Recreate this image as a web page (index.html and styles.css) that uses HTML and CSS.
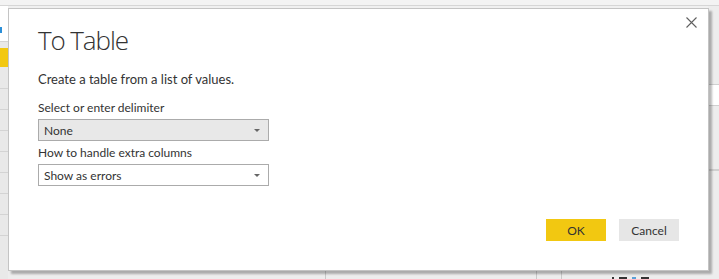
FILE: index.html
```html
<!DOCTYPE html>
<html lang="en">
<head>
  <meta charset="UTF-8">
  <meta name="viewport" content="width=device-width, initial-scale=1.0">
  <title>To Table</title>
  <link rel="stylesheet" href="styles.css">
</head>
<body>
  <div class="workspace">
    <div class="top-strip"></div>
    <div class="workspace-body">
      <div class="row-col left-col">
        <div class="cell cell-white"><span class="cursor-mark"></span></div>
        <div class="cell cell-yellow"></div>
        <div class="cell"></div>
        <div class="cell"></div>
        <div class="cell"></div>
        <div class="cell"></div>
        <div class="cell"></div>
        <div class="cell"></div>
        <div class="cell"></div>
        <div class="cell"></div>
      </div>
      <div class="main-area">
        <div class="bottom-cols">
          <div class="bcol bcol-a"></div>
          <div class="bcol bcol-b"></div>
          <div class="bcol bcol-c"></div>
          <div class="bcol bcol-d">
            <span class="glyph-bit"></span>
            <span class="glyph-bit bit-wide"></span>
            <span class="glyph-bit bit-blue"></span>
            <span class="glyph-bit bit-wide"></span>
          </div>
        </div>
      </div>
      <div class="row-col right-col">
        <div class="rcell rcell-top"></div>
        <div class="rcell rcell-white"></div>
        <div class="rcell rcell-mid"></div>
        <div class="rcell"></div>
      </div>
    </div>
  </div>

  <div class="dialog" role="dialog" aria-labelledby="dialog-title">
    <button class="close-btn" aria-label="Close">
      <svg width="11" height="11" viewBox="0 0 11 11">
        <path d="M0.5 0.5 L10.5 10.5 M10.5 0.5 L0.5 10.5" stroke="#5f5f5f" stroke-width="1.1" fill="none"/>
      </svg>
    </button>
    <h2 class="dialog-title" id="dialog-title">To Table</h2>
    <p class="dialog-desc">Create a table from a list of values.</p>
    <div class="field">
      <label for="delimiter">Select or enter delimiter</label>
      <div class="select select-disabled" id="delimiter">
        <span>None</span>
        <span class="caret"></span>
      </div>
    </div>
    <div class="field">
      <label for="extra-columns">How to handle extra columns</label>
      <div class="select" id="extra-columns">
        <span>Show as errors</span>
        <span class="caret"></span>
      </div>
    </div>
    <div class="dialog-actions">
      <button class="btn btn-primary">OK</button>
      <button class="btn">Cancel</button>
    </div>
  </div>
</body>
</html>
```

FILE: styles.css
```css
* {
  box-sizing: border-box;
}
html, body {
  margin: 0;
  width: 719px;
  height: 279px;
  overflow: hidden;
  background: #f0f0f0;
  font-family: "Segoe UI", Lato, "Open Sans", sans-serif;
  color: #333;
}
.workspace {
  display: flex;
  flex-direction: column;
  height: 279px;
}
.top-strip {
  height: 6px;
  background: #f3f3f3;
  border-bottom: 1px solid #d6d6d6;
}
.workspace-body {
  flex: 1;
  display: flex;
}
.left-col {
  width: 8px;
  display: flex;
  flex-direction: column;
  background: #e9e9e9;
}
.cell {
  height: 21px;
  border-bottom: 1px solid #d4d4d4;
}
.cell-white {
  height: 36px;
  background: #fff;
  position: relative;
}
.cursor-mark {
  position: absolute;
  left: 0;
  top: 21px;
  width: 2px;
  height: 6px;
  background: #2b8fd8;
}
.cell-yellow {
  height: 26px;
  border-top: 6px solid #e9e9e9;
  background: #f2c811;
  border-bottom: 1px solid #e9e9e9;
}
.main-area {
  flex: 1;
  display: flex;
  flex-direction: column;
  justify-content: flex-end;
  background: #f0f0f0;
}
.bottom-cols {
  height: 12px;
  display: flex;
  background: #ededed;
}
.bcol {
  border-right: 1px solid #c9c9c9;
}
.bcol-a { width: 318px; }
.bcol-b { width: 211px; }
.bcol-c { width: 25px; }
.bcol-d {
  flex: 1;
  border-right: 0;
  display: flex;
  align-items: flex-end;
  gap: 5px;
  padding-left: 50px;
}
.glyph-bit {
  width: 2px;
  height: 2px;
  background: #333;
}
.glyph-bit.bit-wide { width: 8px; }
.glyph-bit.bit-blue { background: #5aa0d8; width: 4px; }
.right-col {
  width: 11px;
  display: flex;
  flex-direction: column;
  background: #ededed;
}
.rcell {
  border-bottom: 1px solid #d0d0d0;
}
.rcell-top { height: 79px; }
.rcell-white { height: 21px; background: #fff; }
.rcell-mid { height: 64px; }

/* modal */
.dialog {
  position: absolute;
  left: 8px;
  top: 8px;
  width: 701px;
  height: 263px;
  background: #fff;
  border: 1px solid #c4c4c4;
  box-shadow: 3px 3px 2px rgba(0, 0, 0, 0.28);
  padding: 15px 29px 0 29px;
  display: flex;
  flex-direction: column;
}
.close-btn {
  position: absolute;
  top: 8px;
  right: 11px;
  border: 0;
  background: none;
  padding: 0;
  width: 11px;
  height: 11px;
  display: flex;
}
.dialog-title {
  margin: 0;
  font-family: "Segoe UI Light", "Open Sans", sans-serif;
  font-size: 26px;
  font-weight: 300;
  letter-spacing: -1.1px;
  line-height: 32px;
  color: #333;
}
.dialog-desc {
  margin: 14px 0 0;
  font-size: 13px;
  line-height: 18px;
  color: #333;
}
.field {
  display: flex;
  flex-direction: column;
  margin-top: 12px;
}
.field + .field {
  margin-top: 4px;
}
.field label {
  font-size: 12px;
  line-height: 16px;
  margin-bottom: 3px;
}
.select {
  width: 231px;
  height: 22px;
  border: 1px solid #ababab;
  background: #fff;
  display: flex;
  align-items: center;
  justify-content: space-between;
  padding: 0 8px 0 5px;
  font-size: 12px;
  color: #333;
}
.select-disabled {
  background: #e8e8e8;
}
.caret {
  width: 0;
  height: 0;
  border-left: 3px solid transparent;
  border-right: 3px solid transparent;
  border-top: 3px solid #666;
}
.dialog-actions {
  margin-top: auto;
  margin-bottom: 29px;
  display: flex;
  justify-content: flex-end;
  gap: 13px;
}
.btn {
  width: 60px;
  height: 22px;
  border: 0;
  background: #e6e6e6;
  font-family: inherit;
  font-size: 12px;
  color: #333;
  padding: 0;
}
.btn-primary {
  background: #f2c811;
}
```
